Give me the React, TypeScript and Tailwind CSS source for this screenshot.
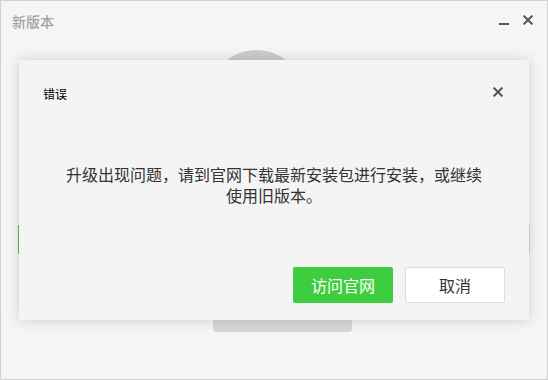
import React from "react";

function CloseIcon({ className }: { className?: string }) {
  return (
    <svg viewBox="0 0 10 10" className={className} fill="none" stroke="currentColor" strokeWidth="2">
      <path d="M0.6 0.6L9.4 9.4M9.4 0.6L0.6 9.4" />
    </svg>
  );
}

function ErrorDialog() {
  return (
    <div className="absolute left-[18px] top-[59px] flex h-[260px] w-[510px] flex-col bg-[#f4f4f4] shadow-[0_0_12px_rgba(0,0,0,0.16)]">
      <div className="flex items-start justify-between pl-[24px] pr-[25px] pt-[25px]">
        <span className="text-[12px] leading-[18px] text-black">错误</span>
        <button className="mt-[2px] flex h-[10px] w-[12px] items-center justify-center text-[#555]">
          <CloseIcon className="h-[10px] w-[10px]" />
        </button>
      </div>
      <p className="mt-[61px] px-[40px] text-center text-[16px] leading-[21px] text-[#333]">
        升级出现问题，请到官网下载最新安装包进行安装，或继续
        <br />
        使用旧版本。
      </p>
      <div className="mt-auto flex justify-end gap-[12px] pb-[17px] pr-[24px]">
        <button className="h-[36px] w-[100px] rounded-[2px] bg-[#3dcd3e] text-[16px] text-white">访问官网</button>
        <button className="h-[36px] w-[100px] rounded-[2px] border border-[#dcdcdc] bg-white text-[16px] text-[#333]">
          取消
        </button>
      </div>
    </div>
  );
}

export default function App() {
  return (
    <div
      className="relative h-[380px] w-[548px] overflow-hidden border border-[#cdd2d4] bg-[#f5f5f5]"
      style={{ fontFamily: '"Noto Sans CJK SC", "Noto Sans", sans-serif' }}
    >
      <div className="flex h-[49px] items-start justify-between pl-[11px] pr-[14px] pt-[10px]">
        <span className="text-[14px] font-medium leading-[20px] text-[#a3a3a3]">新版本</span>
        <div className="flex items-center gap-[14px] pt-[3px] text-[#555]">
          <div className="mt-[9px] h-[2px] w-[10px] bg-[#555]" />
          <CloseIcon className="h-[10px] w-[10px]" />
        </div>
      </div>
      <div className="ml-[207px] h-[97px] w-[97px] rounded-full bg-[#cdcdcd]" />
      <div className="mt-[78px] ml-[17px] flex h-[29px] w-[512px] bg-[#e9e9e9]">
        <div className="w-[1px] bg-[#3dcd3e]" />
        <div className="flex-1" />
        <div className="w-[1px] bg-[#d6d6d6]" />
      </div>
      <div className="mt-[42px] ml-[212px] h-[36px] w-[139px] rounded-b-[3px] bg-[#d6d6d6]" />
      <ErrorDialog />
    </div>
  );
}
